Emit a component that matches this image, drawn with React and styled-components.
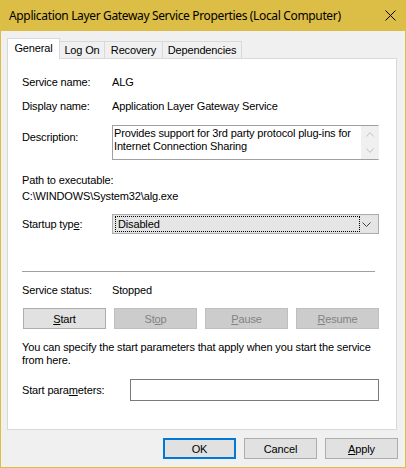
import React from "react";
import styled, { createGlobalStyle } from "styled-components";

const Global = createGlobalStyle`
  html, body { margin: 0; padding: 0; background: #f0f0f0; }
  * { box-sizing: border-box; }
`;

const Window = styled.div`
  width: 406px;
  height: 468px;
  border: 1px solid #dcbd45;
  border-top: none;
  background: #f0f0f0;
  display: flex;
  flex-direction: column;
  font-family: "Liberation Sans", Arial, sans-serif;
  font-size: 11px;
  letter-spacing: -0.15px;
  color: #000;
`;

const TitleBar = styled.div`
  height: 31px;
  margin: 0 -1px;
  background: #dcbd45;
  display: flex;
  align-items: center;
  justify-content: space-between;
  padding: 0 10px 0 9px;
  flex: none;
`;

const Title = styled.div`
  font-family: "Noto Sans", "Open Sans", sans-serif;
  font-size: 12px;
  letter-spacing: -0.35px;
  color: #000;
  white-space: nowrap;
`;

const CloseIcon = () => (
  <svg width="11" height="11" viewBox="0 0 11 11">
    <path d="M0.5 0.5 L10.5 10.5 M10.5 0.5 L0.5 10.5" stroke="#000" strokeWidth="1" fill="none" />
  </svg>
);

const Body = styled.div`
  flex: 1;
  padding: 7px 8px 0 6px;
  display: flex;
  flex-direction: column;
`;

const TabStrip = styled.div`
  display: flex;
  align-items: flex-end;
`;

const Tab = styled.div`
  position: relative;
  z-index: ${(p) => (p.$active ? 1 : 0)};
  width: ${(p) => p.$w}px;
  height: ${(p) => (p.$active ? 21 : 17)}px;
  margin-bottom: ${(p) => (p.$active ? -1 : 0)}px;
  background: ${(p) => (p.$active ? "#fff" : "#f0f0f0")};
  border: 1px solid #d9d9d9;
  border-bottom: none;
  border-left: ${(p) => (p.$first ? "1px solid #d9d9d9" : "none")};
  display: flex;
  justify-content: center;
  align-items: flex-start;
  padding-top: ${(p) => (p.$active ? 3 : 2)}px;
  line-height: 13px;
  white-space: nowrap;
`;

const Panel = styled.div`
  width: 390px;
  height: 372px;
  background: #fff;
  border: 1px solid #d9d9d9;
  padding: 17px 0 0 14px;
  display: flex;
  flex-direction: column;
  flex: none;
`;

const Row = styled.div`
  display: flex;
  align-items: ${(p) => p.$align || "center"};
  margin-top: ${(p) => p.$mt || 0}px;
  line-height: 13px;
`;

const Label = styled.div`
  width: ${(p) => p.$w || 90}px;
  flex: none;
  padding-top: ${(p) => p.$pt || 0}px;
  white-space: nowrap;
`;

const Value = styled.div`
  white-space: nowrap;
`;

const TextLine = styled.div`
  margin-top: ${(p) => p.$mt || 0}px;
  line-height: 13px;
  white-space: nowrap;
`;

const DescBox = styled.div`
  width: 267px;
  height: 35px;
  border: 1px solid #a0a0a0;
  border-right-color: #f0f0f0;
  display: flex;
`;

const DescText = styled.div`
  flex: 1;
  padding: 1px 0 0 1px;
  line-height: 13px;
  white-space: nowrap;
  overflow: hidden;
`;

const ScrollBar = styled.div`
  width: 17px;
  background: #f0f0f0;
  display: flex;
  flex-direction: column;
  justify-content: space-around;
  align-items: center;
`;

const Chevron = ({ up, color = "#c0c0c0", w = 7, h = 4 }) => (
  <svg width={w + 1} height={h + 1} viewBox={`0 0 ${w + 1} ${h + 1}`} style={{ display: "block" }}>
    <polyline
      points={
        up
          ? `0.5,${h + 0.5} ${w / 2 + 0.5},0.5 ${w + 0.5},${h + 0.5}`
          : `0.5,0.5 ${w / 2 + 0.5},${h + 0.5} ${w + 0.5},0.5`
      }
      stroke={color}
      strokeWidth="1"
      fill="none"
    />
  </svg>
);

const Combo = styled.div`
  width: 267px;
  height: 20px;
  border: 1px solid #adadad;
  background: #e5e5e5;
  display: flex;
  align-items: center;
  padding: 1px 7px 1px 2px;
`;

const FocusBox = styled.div`
  width: 245px;
  height: 16px;
  border: 1px dotted #000;
  padding-left: 2px;
  line-height: 14px;
`;

const ComboArrow = styled.div`
  margin-left: auto;
  display: flex;
  align-items: center;
`;

const Separator = styled.div`
  width: 353px;
  height: 1px;
  background: #a0a0a0;
  margin-top: 37px;
`;

const ButtonGrid = styled.div`
  display: grid;
  grid-template-columns: repeat(4, 1fr);
  column-gap: 8px;
  width: 356px;
  margin: 11px 0 0 1px;
`;

const Button = styled.div`
  height: 21px;
  width: ${(p) => (p.$w ? `${p.$w}px` : "auto")};
  display: flex;
  align-items: center;
  justify-content: center;
  background: ${(p) => (p.$disabled ? "#cccccc" : "#e1e1e1")};
  color: ${(p) => (p.$disabled ? "#838383" : "#000")};
  border: ${(p) => (p.$default ? "2px solid #0078d7" : p.$disabled ? "1px solid #bfbfbf" : "1px solid #adadad")};
  white-space: nowrap;
`;

const Para = styled.div`
  margin-top: 12px;
  line-height: 13px;
  white-space: nowrap;
`;

const Input = styled.div`
  width: 249px;
  height: 22px;
  border: 1px solid #7a7a7a;
  background: #fff;
`;

const Footer = styled.div`
  display: flex;
  justify-content: flex-end;
  gap: 8px;
  margin: 8px -1px 0 0;
`;

export default function App() {
  return (
    <>
      <Global />
      <Window>
        <TitleBar>
          <Title>Application Layer Gateway Service Properties (Local Computer)</Title>
          <CloseIcon />
        </TitleBar>
        <Body>
          <TabStrip>
            <Tab $active $first $w={53}>General</Tab>
            <Tab $w={45}>Log On</Tab>
            <Tab $w={58}>Recovery</Tab>
            <Tab $w={79}>Dependencies</Tab>
          </TabStrip>
          <Panel>
            <Row>
              <Label>Service name:</Label>
              <Value>ALG</Value>
            </Row>
            <Row $mt={11}>
              <Label>Display name:</Label>
              <Value>Application Layer Gateway Service</Value>
            </Row>
            <Row $mt={12} $align="flex-start">
              <Label $pt={6}>Description:</Label>
              <DescBox>
                <DescText>
                  Provides support for 3rd party protocol plug-ins for
                  <br />
                  Internet Connection Sharing
                </DescText>
                <ScrollBar>
                  <Chevron up />
                  <Chevron />
                </ScrollBar>
              </DescBox>
            </Row>
            <TextLine $mt={14}>Path to executable:</TextLine>
            <TextLine $mt={3}>C:\WINDOWS\System32\alg.exe</TextLine>
            <Row $mt={11}>
              <Label>
                Startup typ<u>e</u>:
              </Label>
              <Combo>
                <FocusBox>Disabled</FocusBox>
                <ComboArrow>
                  <Chevron color="#404040" w={8} h={4} />
                </ComboArrow>
              </Combo>
            </Row>
            <Separator />
            <Row $mt={12}>
              <Label>Service status:</Label>
              <Value>Stopped</Value>
            </Row>
            <ButtonGrid>
              <Button>
                <u>S</u>tart
              </Button>
              <Button $disabled>
                St<u>o</u>p
              </Button>
              <Button $disabled>
                <u>P</u>ause
              </Button>
              <Button $disabled>
                <u>R</u>esume
              </Button>
            </ButtonGrid>
            <Para>
              You can specify the start parameters that apply when you start the service
              <br />
              from here.
            </Para>
            <Row $mt={12}>
              <Label $w={108}>
                Start para<u>m</u>eters:
              </Label>
              <Input />
            </Row>
          </Panel>
          <Footer>
            <Button $default $w={73}>OK</Button>
            <Button $w={73}>Cancel</Button>
            <Button $w={73}>
              <u>A</u>pply
            </Button>
          </Footer>
        </Body>
      </Window>
    </>
  );
}
